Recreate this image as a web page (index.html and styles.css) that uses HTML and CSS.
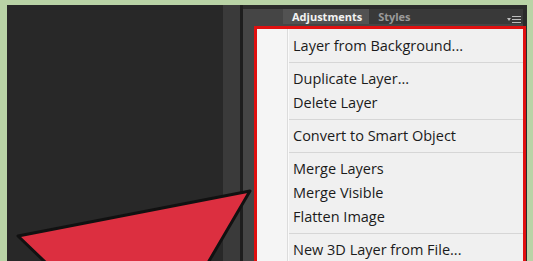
FILE: index.html
```html
<!DOCTYPE html>
<html lang="en">
<head>
  <meta charset="UTF-8">
  <meta name="viewport" content="width=device-width, initial-scale=1.0">
  <title>Layer Menu</title>
  <link rel="stylesheet" href="styles.css">
</head>
<body>
  <div class="app">
    <div class="canvas"></div>
    <div class="strip"></div>
    <div class="divider"></div>

    <div class="panel">
      <div class="tabbar">
        <div class="tab-gap"></div>
        <div class="tabs">
          <span class="tab active">Adjustments</span>
          <span class="tab">Styles</span>
          <svg class="panel-menu" width="14" height="9" viewBox="0 0 14 9">
            <polygon points="0,3 4,3 2,6" fill="#bdbdbd"/>
            <rect x="5" y="1" width="9" height="1" fill="#bdbdbd"/>
            <rect x="5" y="4" width="9" height="1" fill="#bdbdbd"/>
            <rect x="5" y="7" width="9" height="1" fill="#bdbdbd"/>
          </svg>
        </div>
      </div>

      <div class="panel-body">
        <!-- context menu, outlined in red -->
        <ul class="menu">
          <li class="item">Layer from Background...</li>
          <li class="sep"></li>
          <li class="item">Duplicate Layer...</li>
          <li class="item">Delete Layer</li>
          <li class="sep"></li>
          <li class="item">Convert to Smart Object</li>
          <li class="sep"></li>
          <li class="item">Merge Layers</li>
          <li class="item">Merge Visible</li>
          <li class="item">Flatten Image</li>
          <li class="sep"></li>
          <li class="item">New 3D Layer from File...</li>
        </ul>
      </div>
    </div>
  </div>

  <!-- pointer arrow drawn over the screenshot -->
  <svg class="arrow" width="533" height="261" viewBox="0 0 533 261">
    <polygon points="250,191 18,236 69,285 195,285" fill="#dc2f40" stroke="#111" stroke-width="3" stroke-linejoin="round"/>
  </svg>
</body>
</html>
```

FILE: styles.css
```css
html, body {
  margin: 0;
  padding: 0;
}

body {
  background-color: #b9d3a6;
  padding: 5px 6px 0 7px;
  height: 261px;
  box-sizing: border-box;
  overflow: hidden;
  position: relative;
  font-family: "Open Sans", "Noto Sans", sans-serif;
}

.app {
  display: flex;
  height: 100%;
  background: #2a2a2a;
}

.canvas {
  width: 216px;
  background: #282828;
}

.strip {
  width: 17px;
  background: #3a3a3a;
}

.divider {
  width: 3px;
  background: #1e1e1e;
}

.panel {
  flex: 1;
  display: flex;
  flex-direction: column;
  background: #2b2b2b;
  padding-right: 4px;
}

.tabbar {
  display: flex;
  margin-top: 4px;
  height: 20px;
}

.tab-gap {
  width: 40px;
  background: #454545;
}

.tabs {
  flex: 1;
  display: flex;
  align-items: stretch;
  background: #393939;
}

.tab {
  display: flex;
  align-items: center;
  padding: 0 7px 0 9px;
  font-size: 11px;
  font-weight: bold;
  color: #9a9a9a;
}

.tab.active {
  background: #525252;
  color: #f2f2f2;
}

.panel-menu {
  margin: 6px 2px 0 auto;
}

.panel-body {
  flex: 1;
  background: #454545;
  padding: 2px 0 0 11px;
}

.menu {
  list-style: none;
  margin: 0 -3px 0 0;
  padding: 5px 0 0 0;
  height: 100%;
  border: 3px solid #e01010;
  border-bottom: none;
  background: linear-gradient(to right, #f5f5f5 30px, #dcdcdc 30px, #dcdcdc 31px, #fafafa 31px, #fafafa 32px, #f0f0f0 32px);
  color: #1b1b1b;
  font-size: 14.5px;
}

.item {
  height: 24px;
  line-height: 24px;
  padding-left: 36px;
  white-space: nowrap;
}

.sep {
  height: 9px;
  margin-left: 32px;
  background: linear-gradient(#d6d6d6, #d6d6d6) 0 4px / 100% 1px no-repeat;
}

.arrow {
  position: absolute;
  left: 0;
  top: 0;
  pointer-events: none;
}
```
